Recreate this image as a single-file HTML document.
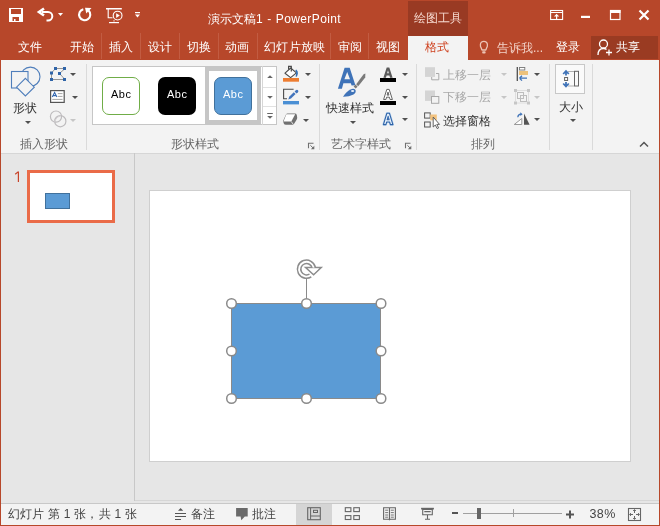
<!DOCTYPE html>
<html><head><meta charset="utf-8">
<style>
*{margin:0;padding:0;box-sizing:border-box}
html,body{will-change:transform;width:660px;height:526px;overflow:hidden;background:#E6E6E6;font-family:"Liberation Sans",sans-serif;font-size:12px;color:#444}
.a{position:absolute}
.t{position:absolute;white-space:nowrap;line-height:1}
svg{position:absolute;overflow:visible}
#title{left:0;top:0;width:660px;height:60px;background:#B7472A}
.tab{color:#fff}
.sep{position:absolute;width:1px;background:#C25C42}
#ribbon{left:1px;top:60px;width:658px;height:94px;background:#F3F3F3;border-bottom:1px solid #D6D6D6}
.gsep{position:absolute;width:1px;background:#DADADA;top:64px;height:86px}
.dd{position:absolute;width:0;height:0;border-left:3px solid transparent;border-right:3px solid transparent;border-top:3px solid #505050}
.ddl{border-top-color:#C6C6C6}
.gl{color:#666}
</style></head><body>
<div id="title" class="a"></div>
<!-- window border -->
<div class="a" style="left:0;top:60px;width:1px;height:466px;background:#B7472A"></div>
<div class="a" style="left:659px;top:60px;width:1px;height:466px;background:#B7472A"></div>
<div class="a" style="left:0;top:525px;width:660px;height:1px;background:#B7472A"></div>

<!-- QAT icons -->
<svg style="left:0;top:0" width="160" height="34">
  <!-- save -->
  <rect x="9" y="8" width="14" height="14" fill="#fff"/>
  <rect x="11" y="9" width="10" height="5" fill="#B7472A"/>
  <rect x="12.5" y="17" width="6.5" height="4" fill="#B7472A"/>
  <rect x="14" y="19" width="1.5" height="2" fill="#fff"/>
  <!-- undo -->
  <path d="M42 12 H48 A4.3 4.3 0 0 1 48 20.6 H46.5" fill="none" stroke="#fff" stroke-width="2"/>
  <path d="M44 8.5 L39 12 L44 15.5" fill="none" stroke="#fff" stroke-width="2.6" stroke-linejoin="miter"/>
  <path d="M58 13 L63 13 L60.5 16 Z" fill="#fff"/>
  <!-- redo/refresh -->
  <path d="M83.3 9.2 A5.6 5.6 0 1 0 88.6 10.6" fill="none" stroke="#fff" stroke-width="2.1"/>
  <path d="M85 7.8 L91.5 8 L86.3 13.6 Z" fill="#fff"/>
  <!-- slideshow from beginning -->
  <rect x="106" y="8" width="15.8" height="1.5" fill="#fff"/>
  <path d="M108.2 9 V17.8 H112.5" fill="none" stroke="#fff" stroke-width="1.1"/>
  <circle cx="117.6" cy="15.6" r="4.4" fill="none" stroke="#fff" stroke-width="1.1"/>
  <path d="M116.2 13.2 L119.8 15.6 L116.2 18 Z" fill="#fff"/>
  <path d="M114 20.2 V21.5" stroke="#fff" stroke-width="1"/>
  <rect x="109" y="22" width="10" height="1.2" fill="#fff"/>
  <!-- customize -->
  <rect x="135" y="12" width="5" height="1.2" fill="#fff"/>
  <path d="M135 14.5 H140 L137.5 17.5 Z" fill="#fff"/>
</svg>
<div class="t" style="left:208px;top:12.5px;color:#fff;font-size:12px">演示文稿</div><div class="t" style="left:256px;top:13px;color:#fff;font-size:12px;letter-spacing:0.4px;word-spacing:0.4px">1 - PowerPoint</div>

<!-- contextual header -->
<div class="a" style="left:408px;top:1px;width:60px;height:35px;background:#993A23"></div>
<div class="t" style="left:414px;top:12px;color:#F6D9CF">绘图工具</div>

<!-- window controls -->
<svg style="left:540px;top:0" width="120" height="34">
  <rect x="10.6" y="10.5" width="12" height="9" fill="none" stroke="#fff" stroke-width="1.1"/>
  <path d="M10.5 12.5 H22.5" stroke="#fff" stroke-width="1"/>
  <path d="M16.6 19.5 V15.5" stroke="#fff" stroke-width="1.2"/>
  <path d="M14 16.5 L16.6 13.8 L19.2 16.5 Z" fill="#fff"/>
  <rect x="41" y="15.8" width="9" height="2.2" fill="#fff"/>
  <rect x="70.5" y="10.5" width="9.5" height="9" fill="none" stroke="#fff" stroke-width="1.2"/>
  <rect x="70" y="10" width="10.5" height="3" fill="#fff"/>
  <path d="M99.5 10.5 L108.5 19.5 M108.5 10.5 L99.5 19.5" stroke="#fff" stroke-width="2.2"/>
</svg>

<!-- tabs -->
<div class="t tab" style="left:18px;top:41px">文件</div>
<div class="t tab" style="left:70px;top:41px">开始</div>
<div class="sep" style="left:101px;top:33px;height:26px"></div>
<div class="t tab" style="left:109px;top:41px">插入</div>
<div class="sep" style="left:140px;top:33px;height:26px"></div>
<div class="t tab" style="left:148px;top:41px">设计</div>
<div class="sep" style="left:179px;top:33px;height:26px"></div>
<div class="t tab" style="left:187px;top:41px">切换</div>
<div class="sep" style="left:218px;top:33px;height:26px"></div>
<div class="t tab" style="left:225px;top:41px">动画</div>
<div class="sep" style="left:257px;top:33px;height:26px"></div>
<div class="t tab" style="left:264px;top:41px;letter-spacing:0.3px">幻灯片放映</div>
<div class="sep" style="left:330px;top:33px;height:26px"></div>
<div class="t tab" style="left:338px;top:41px">审阅</div>
<div class="sep" style="left:368px;top:33px;height:26px"></div>
<div class="t tab" style="left:376px;top:41px">视图</div>
<div class="a" style="left:408px;top:36px;width:60px;height:25px;background:#F3F3F3"></div>
<div class="t" style="left:425px;top:41px;color:#CF4422">格式</div>
<svg style="left:474px;top:36px" width="20" height="22">
  <path d="M8 14 L7.3 12.2 Q6.2 10.5 6.4 8.8 A3.5 3.5 0 0 1 13.4 8.8 Q13.6 10.5 12.5 12.2 L11.8 14 Z" fill="none" stroke="#ECC3B4" stroke-width="1.3" stroke-linejoin="round"/>
  <rect x="8.2" y="15.3" width="3.4" height="2.2" rx="0.8" fill="#ECC3B4"/>
</svg>
<div class="t" style="left:497px;top:42px;color:#F2D2C8">告诉我...</div>
<div class="t tab" style="left:556px;top:41px">登录</div>
<div class="a" style="left:591px;top:36px;width:67px;height:23px;background:#9A3B22"></div>
<svg style="left:596px;top:38px" width="18" height="18">
  <circle cx="7.5" cy="6" r="4" fill="none" stroke="#fff" stroke-width="1.3"/>
  <path d="M2 17 C2 12 4 10.5 7.5 10.5 C9 10.5 10 11 10.5 11.5" fill="none" stroke="#fff" stroke-width="1.3"/>
  <path d="M10 14.5 H16 M13 11.5 V17.5" stroke="#fff" stroke-width="1.3"/>
</svg>
<div class="t tab" style="left:616px;top:41px">共享</div>

<!-- ribbon -->
<div id="ribbon" class="a"></div>
<!-- group 1: insert shapes -->
<svg style="left:0;top:60px" width="90" height="70">
  <circle cx="30.4" cy="16.7" r="9.6" fill="none" stroke="#4F7EBB" stroke-width="1.1"/>
  <rect x="11.5" y="11.5" width="16.5" height="16.5" fill="#F3F3F3" stroke="#4F7EBB" stroke-width="1.1"/>
  <path d="M25.4 18.3 L34.3 27.2 L25.4 36 L16.5 27.2 Z" fill="#F3F3F3" stroke="#4F7EBB" stroke-width="1.1"/>
  <!-- edit shape nodes -->
  <path d="M56 8.5 H64 M55 9 L51.5 13 M51.5 14 V19 M52 19.5 H64 M64.5 9 L59.5 13.5 M59.5 13.5 L64.5 19" fill="none" stroke="#8A8A8A" stroke-width="0.9"/>
  <g fill="#2F64A8">
  <rect x="54" y="7" width="3" height="3"/>
  <rect x="63" y="7" width="3" height="3"/>
  <rect x="50" y="11.5" width="3" height="3"/>
  <rect x="58" y="12" width="3" height="3"/>
  <rect x="50" y="18" width="3" height="3"/>
  <rect x="63" y="18" width="3" height="3"/>
  </g>
  <!-- textbox -->
  <rect x="50.6" y="30.6" width="13.6" height="11.8" fill="#fff" stroke="#555" stroke-width="1.2"/>
  <path d="M52.3 37 L54.6 32.5 L56.9 37 M53.3 35.6 H55.9" fill="none" stroke="#3468B0" stroke-width="1.1"/>
  <path d="M57.8 33.6 H62.5 M57.8 36.4 H62.5 M52.3 39.4 H62.5" stroke="#9A9A9A" stroke-width="0.9"/>
  <!-- merge -->
  <circle cx="56" cy="56.6" r="5.6" fill="none" stroke="#BDBBBD" stroke-width="1.2"/>
  <circle cx="60.3" cy="61.2" r="5.6" fill="none" stroke="#BDBBBD" stroke-width="1.2"/>
  <path d="M54 62 Q57 56 61 55.5" fill="none" stroke="#D0CDD0" stroke-width="0.8"/>
</svg>
<div class="dd" style="left:70px;top:73px"></div>
<div class="dd" style="left:72px;top:96px"></div>
<div class="dd ddl" style="left:70px;top:119px"></div>
<div class="t" style="left:13px;top:102px;color:#333">形状</div>
<div class="dd" style="left:25px;top:121px"></div>
<div class="t gl" style="left:20px;top:138px">插入形状</div>
<div class="gsep" style="left:86px"></div>

<!-- group 2: shape styles gallery -->
<div class="a" style="left:92px;top:66px;width:185px;height:59px;background:#fff;border:1px solid #C6C6C6"></div>
<div class="a" style="left:102px;top:77px;width:38px;height:38px;border:1px solid #70AD47;border-radius:7px;background:#fff"></div>
<div class="t" style="left:111px;top:89px;font-size:11px;letter-spacing:0.5px;color:#000">Abc</div>
<div class="a" style="left:158px;top:77px;width:38px;height:38px;border-radius:7px;background:#000"></div>
<div class="t" style="left:167px;top:89px;font-size:11px;letter-spacing:0.5px;color:#fff">Abc</div>
<div class="a" style="left:205px;top:67px;width:56px;height:57px;border:4px solid #C6C6C6;background:#fff"></div>
<div class="a" style="left:214px;top:77px;width:38px;height:38px;border:1px solid #41719C;border-radius:7px;background:#5B9BD5"></div>
<div class="t" style="left:223px;top:89px;font-size:11px;letter-spacing:0.5px;color:#fff">Abc</div>
<div class="a" style="left:262px;top:66px;width:1px;height:59px;background:#D6D6D6"></div>
<div class="a" style="left:263px;top:87px;width:13px;height:1px;background:#E1E1E1"></div>
<div class="a" style="left:263px;top:106px;width:13px;height:1px;background:#E1E1E1"></div>
<svg style="left:263px;top:66px" width="14" height="59">
  <path d="M4.2 12 L7 9.2 L9.8 12 Z" fill="#666"/>
  <path d="M4.2 30 L7 32.8 L9.8 30 Z" fill="#666"/>
  <rect x="4.2" y="47" width="5.6" height="1" fill="#666"/>
  <path d="M4.2 50 L7 52.8 L9.8 50 Z" fill="#666"/>
</svg>
<svg style="left:279px;top:60px" width="36" height="70">
  <!-- fill bucket -->
  <path d="M11.7 8 L17.4 12.8 L11.6 17.6 L6 13.2 Z" fill="#fff" stroke="#4A4A4A" stroke-width="1.1" stroke-linejoin="round"/>
  <path d="M9.6 9.6 V6.4 H12.3 V11.6" fill="none" stroke="#4A4A4A" stroke-width="1.2"/>
  <path d="M17.2 9.6 Q19.2 11.2 18.9 13.4 Q18.6 15.6 17.2 17 L16.6 16.4 Q17.4 13.1 17.2 12.8 L16.4 10.2 Z" fill="#2F6FB7"/>
  <rect x="4" y="18" width="16" height="3.7" fill="#ED7D31"/>
  <!-- pen -->
  <path d="M8 38.8 H4.6 V29.2 H14.6" fill="none" stroke="#4A4A4A" stroke-width="1.1"/>
  <path d="M9.3 39.5 L10.2 36.8 L14.8 32.2 L16.6 34 L12 38.6 Z" fill="#4274BC"/>
  <path d="M15.6 31.4 L16.8 30.2 Q18 29.2 19 30.2 Q19.9 31.2 18.9 32.3 L17.5 33.4 Z" fill="#4274BC"/>
  <rect x="4" y="41" width="16" height="3.4" fill="#4A8FD4"/>
  <!-- effects -->
  <path d="M7 54.5 Q7.5 53.6 8.5 53.6 H16 Q17.3 53.6 17.8 55 L18.2 57.5 Q18.3 58.5 17.6 59.8 L14.5 64.7 H7 Q5.2 64.7 4.8 63.5 L4.2 61.6 Q4 60.8 4.5 59.9 Z" fill="#707070"/>
  <path d="M7.3 54.3 H16.2 L12.3 61.6 H4.5 Z" fill="#fff"/>
  <path d="M12.3 61.6 L14.5 64.7" stroke="#fff" stroke-width="0.8"/>
</svg>
<div class="dd" style="left:305px;top:73px"></div>
<div class="dd" style="left:305px;top:96px"></div>
<div class="dd" style="left:303px;top:119px"></div>
<div class="t gl" style="left:171px;top:138px">形状样式</div>
<svg style="left:307px;top:141.5px" width="9" height="9">
  <path d="M1.5 6.3 V1.3 H6.5" fill="none" stroke="#707070" stroke-width="1.1"/>
  <path d="M3.4 3.3 L6 5.9" stroke="#707070" stroke-width="1"/>
  <path d="M7.3 3.8 V7.3 H3.8 Z" fill="#707070"/>
</svg>
<div class="gsep" style="left:319px"></div>

<!-- group 3: WordArt styles -->
<svg style="left:0;top:0" width="370" height="100">
  <path fill-rule="evenodd" d="M337.9 88.7 L344.6 67.8 L349.7 67.8 L355.4 85.2 L351.6 85.5 L350.8 83.3 L343.4 83.3 L341.9 88.7 Z M344.4 79.3 L347.2 71.9 L350 79.3 Z" fill="#3F73B8"/>
  <path d="M356.2 84.2 L363.6 74.2 L365.4 73.6 L365.2 77.6 L358.2 86.2 Z" fill="#7A7A7A"/>
  <path d="M353.6 86.4 L355.6 84.6 L357.6 86.8 L355.6 88.6 Z" fill="#7A7A7A"/>
  <path d="M343 96.8 Q346 91.5 350.5 89.4 Q354 88 355.5 90 Q356.4 92.5 353.5 94.6 Q349 96.9 343 96.8 Z" fill="#3F73B8"/>
  <ellipse cx="352.6" cy="91" rx="1.6" ry="1.1" fill="#E8F0FA"/>
</svg>
<div class="t" style="left:326px;top:102px;color:#333">快速样式</div>
<div class="dd" style="left:350px;top:121px"></div>
<div class="a" style="left:380px;top:78px;width:16px;height:3.6px;background:#000"></div>
<div class="a" style="left:380px;top:101px;width:16px;height:3.6px;background:#000"></div>
<svg style="left:0;top:0" width="400" height="130">
  <path fill-rule="evenodd" d="M383.4 77.8 L386.7 67.6 H389.3 L392.6 77.8 H390.1 L389.4 75.4 H386.6 L385.9 77.8 Z M387.1 73.3 H388.9 L388 70.3 Z" fill="#5A5A5A"/>
  <path fill-rule="evenodd" d="M383.6 99.5 L386.8 89.4 H389.2 L392.4 99.5 H390.1 L389.4 97.2 H386.6 L385.9 99.5 Z M387.1 95.1 H388.9 L388 92.1 Z" fill="#fff" stroke="#555" stroke-width="0.9" stroke-linejoin="round"/>
  <path fill-rule="evenodd" d="M383.4 124.6 L386.9 113.2 H389.4 L392.9 124.6 H390.4 L389.6 122 H386.7 L385.9 124.6 Z M387.2 119.7 H389.1 L388.15 116.4 Z" fill="#CFE3F6" stroke="#B9D5F0" stroke-width="2.2" stroke-linejoin="round"/>
  <path fill-rule="evenodd" d="M383.4 124.6 L386.9 113.2 H389.4 L392.9 124.6 H390.4 L389.6 122 H386.7 L385.9 124.6 Z M387.2 119.7 H389.1 L388.15 116.4 Z" fill="#E6F1FB" stroke="#2F62A6" stroke-width="1.1" stroke-linejoin="round"/>
  <path d="M387.5 118.5 L388.15 116.6 L388.8 118.5 Z" fill="#5B8FD0"/>
</svg>
<div class="dd" style="left:402px;top:73px"></div>
<div class="dd" style="left:402px;top:96px"></div>
<div class="dd" style="left:402px;top:118px"></div>
<div class="t gl" style="left:331px;top:138px">艺术字样式</div>
<svg style="left:404px;top:141.5px" width="9" height="9">
  <path d="M1.5 6.3 V1.3 H6.5" fill="none" stroke="#707070" stroke-width="1.1"/>
  <path d="M3.4 3.3 L6 5.9" stroke="#707070" stroke-width="1"/>
  <path d="M7.3 3.8 V7.3 H3.8 Z" fill="#707070"/>
</svg>
<div class="gsep" style="left:416px"></div>

<!-- group 4: arrange -->
<svg style="left:420px;top:60px" width="130" height="70">
  <!-- bring forward (disabled) -->
  <rect x="5" y="7.2" width="10" height="9.7" fill="#D4D4D4"/>
  <path d="M11.7 19.8 H18.8 V13.5 H16" fill="none" stroke="#A8A8A8" stroke-width="1"/>
  <path d="M11.7 17 V19.8" stroke="#A8A8A8" stroke-width="1"/>
  <!-- send backward -->
  <rect x="5" y="30.5" width="10" height="10.4" fill="#D4D4D4"/>
  <rect x="11.5" y="36.5" width="7.3" height="6.8" fill="#F3F3F3" stroke="#A8A8A8" stroke-width="1"/>
  <!-- selection pane -->
  <rect x="4.6" y="52.9" width="5.6" height="5.2" fill="none" stroke="#555" stroke-width="1"/>
  <rect x="4.6" y="62" width="5.6" height="5" fill="none" stroke="#555" stroke-width="1"/>
  <rect x="10.2" y="54.5" width="6.6" height="5.8" fill="#F2C27E"/>
  <path d="M13.2 57 V67 L15.3 65 L17.2 68.6 L18.6 67.9 L16.8 64.4 H19.5 Z" fill="#fff" stroke="#555" stroke-width="0.9" stroke-linejoin="round"/>
  <!-- align -->
  <path d="M97.3 7 V21" stroke="#505050" stroke-width="1.3"/>
  <rect x="99.5" y="7.5" width="5.3" height="2.5" fill="#fff" stroke="#777" stroke-width="0.9"/>
  <rect x="99" y="11" width="9" height="4" fill="#EDC27C"/>
  <path d="M99.5 18.2 H107 M99.5 18.2 L102 15.8 M99.5 18.2 L102 20.6" fill="none" stroke="#3F73B8" stroke-width="1.3"/>
  <!-- group (disabled) -->
  <g fill="#C6C6C6">
  <rect x="94" y="29" width="3" height="3"/><rect x="107" y="29" width="3" height="3"/>
  <rect x="94" y="41.5" width="3" height="3"/><rect x="107" y="41.5" width="3" height="3"/>
  </g>
  <path d="M97 30.5 H107 M97 43 H107 M95.5 32 V41.5 M108.5 32 V41.5" fill="none" stroke="#D8D8D8" stroke-width="0.8"/>
  <rect x="97.5" y="32.5" width="6" height="6" fill="none" stroke="#BDBDBD" stroke-width="1"/>
  <rect x="100.5" y="35.5" width="6" height="6" fill="none" stroke="#BDBDBD" stroke-width="1"/>
  <!-- rotate -->
  <path d="M94.2 64.5 L101.8 58.5 V64.5 Z" fill="#fff" stroke="#9A9A9A" stroke-width="1"/>
  <path d="M104 53.5 L109.6 64.8 H104 Z" fill="#555"/>
  <path d="M97.8 57.2 Q98 54.3 101 54.2" fill="none" stroke="#3F73B8" stroke-width="1.2"/>
  <path d="M100.3 52.3 L102.6 54.2 L100.3 56.1 Z" fill="#3F73B8"/>
  </svg>
<div class="t" style="left:443px;top:69px;color:#A8A8A8">上移一层</div>
<div class="t" style="left:443px;top:91px;color:#A8A8A8">下移一层</div>
<div class="t" style="left:443px;top:115px;color:#333">选择窗格</div>
<div class="dd ddl" style="left:501px;top:73px"></div>
<div class="dd ddl" style="left:501px;top:96px"></div>
<div class="dd" style="left:534px;top:73px"></div>
<div class="dd ddl" style="left:534px;top:96px"></div>
<div class="dd" style="left:534px;top:118px"></div>
<div class="t gl" style="left:471px;top:138px">排列</div>
<div class="gsep" style="left:549px"></div>

<!-- group 5: size -->
<div class="a" style="left:555px;top:64px;width:30px;height:30px;border:1px solid #C8C8C8;background:#FAFAFA"></div>
<svg style="left:555px;top:64px" width="30" height="30">
  <path d="M11 7 V11.5 M8.2 10 L11 7 L13.8 10" fill="none" stroke="#3F73B8" stroke-width="1.8"/>
  <path d="M11 22.5 V18 M8.2 19.5 L11 22.5 L13.8 19.5" fill="none" stroke="#3F73B8" stroke-width="1.8"/>
  <rect x="9.6" y="13.5" width="3" height="3" fill="none" stroke="#666" stroke-width="1"/>
  <path d="M13.5 7.5 H19 M13.5 22 H19" stroke="#666" stroke-width="1" stroke-dasharray="1 1"/>
  <rect x="19.5" y="7.3" width="4" height="14.7" fill="none" stroke="#666" stroke-width="1"/>
</svg>
<div class="t" style="left:559px;top:101px;color:#333">大小</div>
<div class="dd" style="left:570px;top:119px"></div>
<div class="gsep" style="left:592px"></div>
<svg style="left:638px;top:140px" width="12" height="8">
  <path d="M2 6.5 L6 2.5 L10 6.5" fill="none" stroke="#555" stroke-width="1.5"/>
</svg>


<!-- body -->
<svg style="left:0;top:160px" width="30" height="30"><path d="M18.4 11.5 V22 M15.2 14.3 L18.4 11.6" fill="none" stroke="#C8442A" stroke-width="1.2"/></svg>
<div class="a" style="left:27px;top:170px;width:88px;height:53px;border:3px solid #EA6B48;background:#fff"></div>
<div class="a" style="left:45px;top:193px;width:25px;height:16px;background:#5B9BD5;border:1px solid #41719C"></div>
<div class="a" style="left:134px;top:153px;width:1px;height:348px;background:#C8C8C8"></div>
<div class="a" style="left:135px;top:500px;width:524px;height:1px;background:#D6D6D6"></div>
<div class="a" style="left:149px;top:190px;width:482px;height:272px;background:#fff;border:1px solid #CFCFCF"></div>

<!-- shape -->
<div class="a" style="left:231px;top:303px;width:150px;height:96px;background:#5B9BD5;border:1px solid #8A8A8A"></div>
<svg style="left:0;top:0" width="660" height="526">
  <path d="M306.5 279 V298" stroke="#8A8A8A" stroke-width="1"/>
  <g fill="#fff" stroke="#8A8A8A" stroke-width="1.5">
    <circle cx="231.5" cy="303.5" r="4.8"/>
    <circle cx="306.5" cy="303.5" r="4.8"/>
    <circle cx="381" cy="303.5" r="4.8"/>
    <circle cx="231.5" cy="351" r="4.8"/>
    <circle cx="381" cy="351" r="4.8"/>
    <circle cx="231.5" cy="398.5" r="4.8"/>
    <circle cx="306.5" cy="398.5" r="4.8"/>
    <circle cx="381" cy="398.5" r="4.8"/>
  </g>
  <!-- rotate handle -->
  <path d="M313.74 267.66 A7.4 7.4 0 1 0 310.42 275.48" fill="none" stroke="#8C8C8C" stroke-width="4.9"/>
  <path d="M305.6 267.6 L321.2 267.6 L313.6 274.8 Z" fill="#fff" stroke="#8C8C8C" stroke-width="1.5" stroke-linejoin="miter"/>
  <path d="M313.74 267.66 A7.4 7.4 0 1 0 310.95 275.11" fill="none" stroke="#fff" stroke-width="1.9"/>
  <path d="M309.5 268.8 L318.3 268.8 L313.6 273.2 Z" fill="#fff"/>
</svg>

<!-- status bar -->
<div class="a" style="left:1px;top:503px;width:658px;height:22px;background:#F3F3F3;border-top:1px solid #C8C8C8"></div>
<div class="t" style="left:8px;top:508px;color:#444;letter-spacing:0.2px">幻灯片 第 1 张，共 1 张</div>
<svg style="left:170px;top:503px" width="20" height="22">
  <path d="M8 7.8 L10.6 5 L13.2 7.8 Z" fill="#555"/>
  <path d="M5 10.5 H16 M5 13.5 H16 M5 16.5 H11" stroke="#555" stroke-width="1"/>
</svg>
<div class="t" style="left:191px;top:508px;color:#444">备注</div>
<svg style="left:234px;top:503px" width="16" height="22">
  <path d="M2.1 5 H13.7 V13.6 H10.8 L7.3 17.2 L6.6 13.6 H2.1 Z" fill="#6A6A6A"/>
</svg>
<div class="t" style="left:252px;top:508px;color:#444">批注</div>
<div class="a" style="left:296px;top:504px;width:36px;height:21px;background:#D5D5D5"></div>
<svg style="left:296px;top:503px" width="200" height="22">
  <rect x="11.7" y="4.7" width="12.6" height="12" fill="none" stroke="#666" stroke-width="1.1"/>
  <path d="M14.6 5 V16.5 M14.6 13 H24" fill="none" stroke="#666" stroke-width="1"/>
  <rect x="17.5" y="7.3" width="4" height="2.2" fill="none" stroke="#666" stroke-width="1"/>
  <g fill="none" stroke="#666" stroke-width="1.1">
  <rect x="49.3" y="4.7" width="5.6" height="3.9"/><rect x="57.8" y="4.7" width="5.6" height="3.9"/>
  <rect x="49.3" y="12.6" width="5.6" height="3.9"/><rect x="57.8" y="12.6" width="5.6" height="3.9"/>
  <path d="M87.6 4.8 H93.5 V16.3 H87.6 Z M93.5 4.8 H99.4 V16.3 H93.5 Z"/>
  <path d="M89.2 7.2 H92.2 M89.2 9.6 H92.2 M89.2 12 H92.2 M89.2 14.2 H92.2 M94.8 7.2 H97.8 M94.8 9.6 H97.8 M94.8 12 H97.8 M94.8 14.2 H97.8" stroke-width="0.9"/>
  <path d="M126.7 6.5 H136.3 V11.7 H126.7 Z M128.3 8.6 H134.7 M131.5 11.7 V15.8 M129 16.3 H134"/>
  </g>
  <rect x="125.1" y="4.8" width="12.8" height="1.7" fill="#666"/>
  <path d="M92.3 16.2 L93.5 17.6 L94.7 16.2 Z" fill="#666"/>
</svg>
<div class="a" style="left:452px;top:512px;width:6px;height:2px;background:#555"></div>
<div class="a" style="left:463px;top:513px;width:99px;height:1px;background:#A0A0A0"></div>
<div class="a" style="left:513px;top:509px;width:1px;height:8px;background:#A0A0A0"></div>
<div class="a" style="left:477px;top:508px;width:4px;height:11px;background:#666"></div>
<svg style="left:565px;top:508.5px" width="12" height="12">
  <path d="M1 5.5 H9 M5 1.5 V9.5" stroke="#555" stroke-width="2"/>
</svg>
<div class="t" style="left:589.5px;top:508px;color:#444;font-size:12.5px;letter-spacing:0.4px">38%</div>
<svg style="left:627px;top:507px" width="16" height="16">
  <rect x="1.5" y="1.5" width="12" height="12" fill="none" stroke="#666" stroke-width="1.1"/>
  <path d="M7.5 3 V6 M7.5 9 V12 M3 7.5 H6 M9 7.5 H12" stroke="#666" stroke-width="1"/>
  <path d="M6 4 L7.5 2.5 L9 4 M6 11 L7.5 12.5 L9 11 M4 6 L2.5 7.5 L4 9 M11 6 L12.5 7.5 L11 9" fill="none" stroke="#666" stroke-width="0.9"/>
</svg>
</body></html>
